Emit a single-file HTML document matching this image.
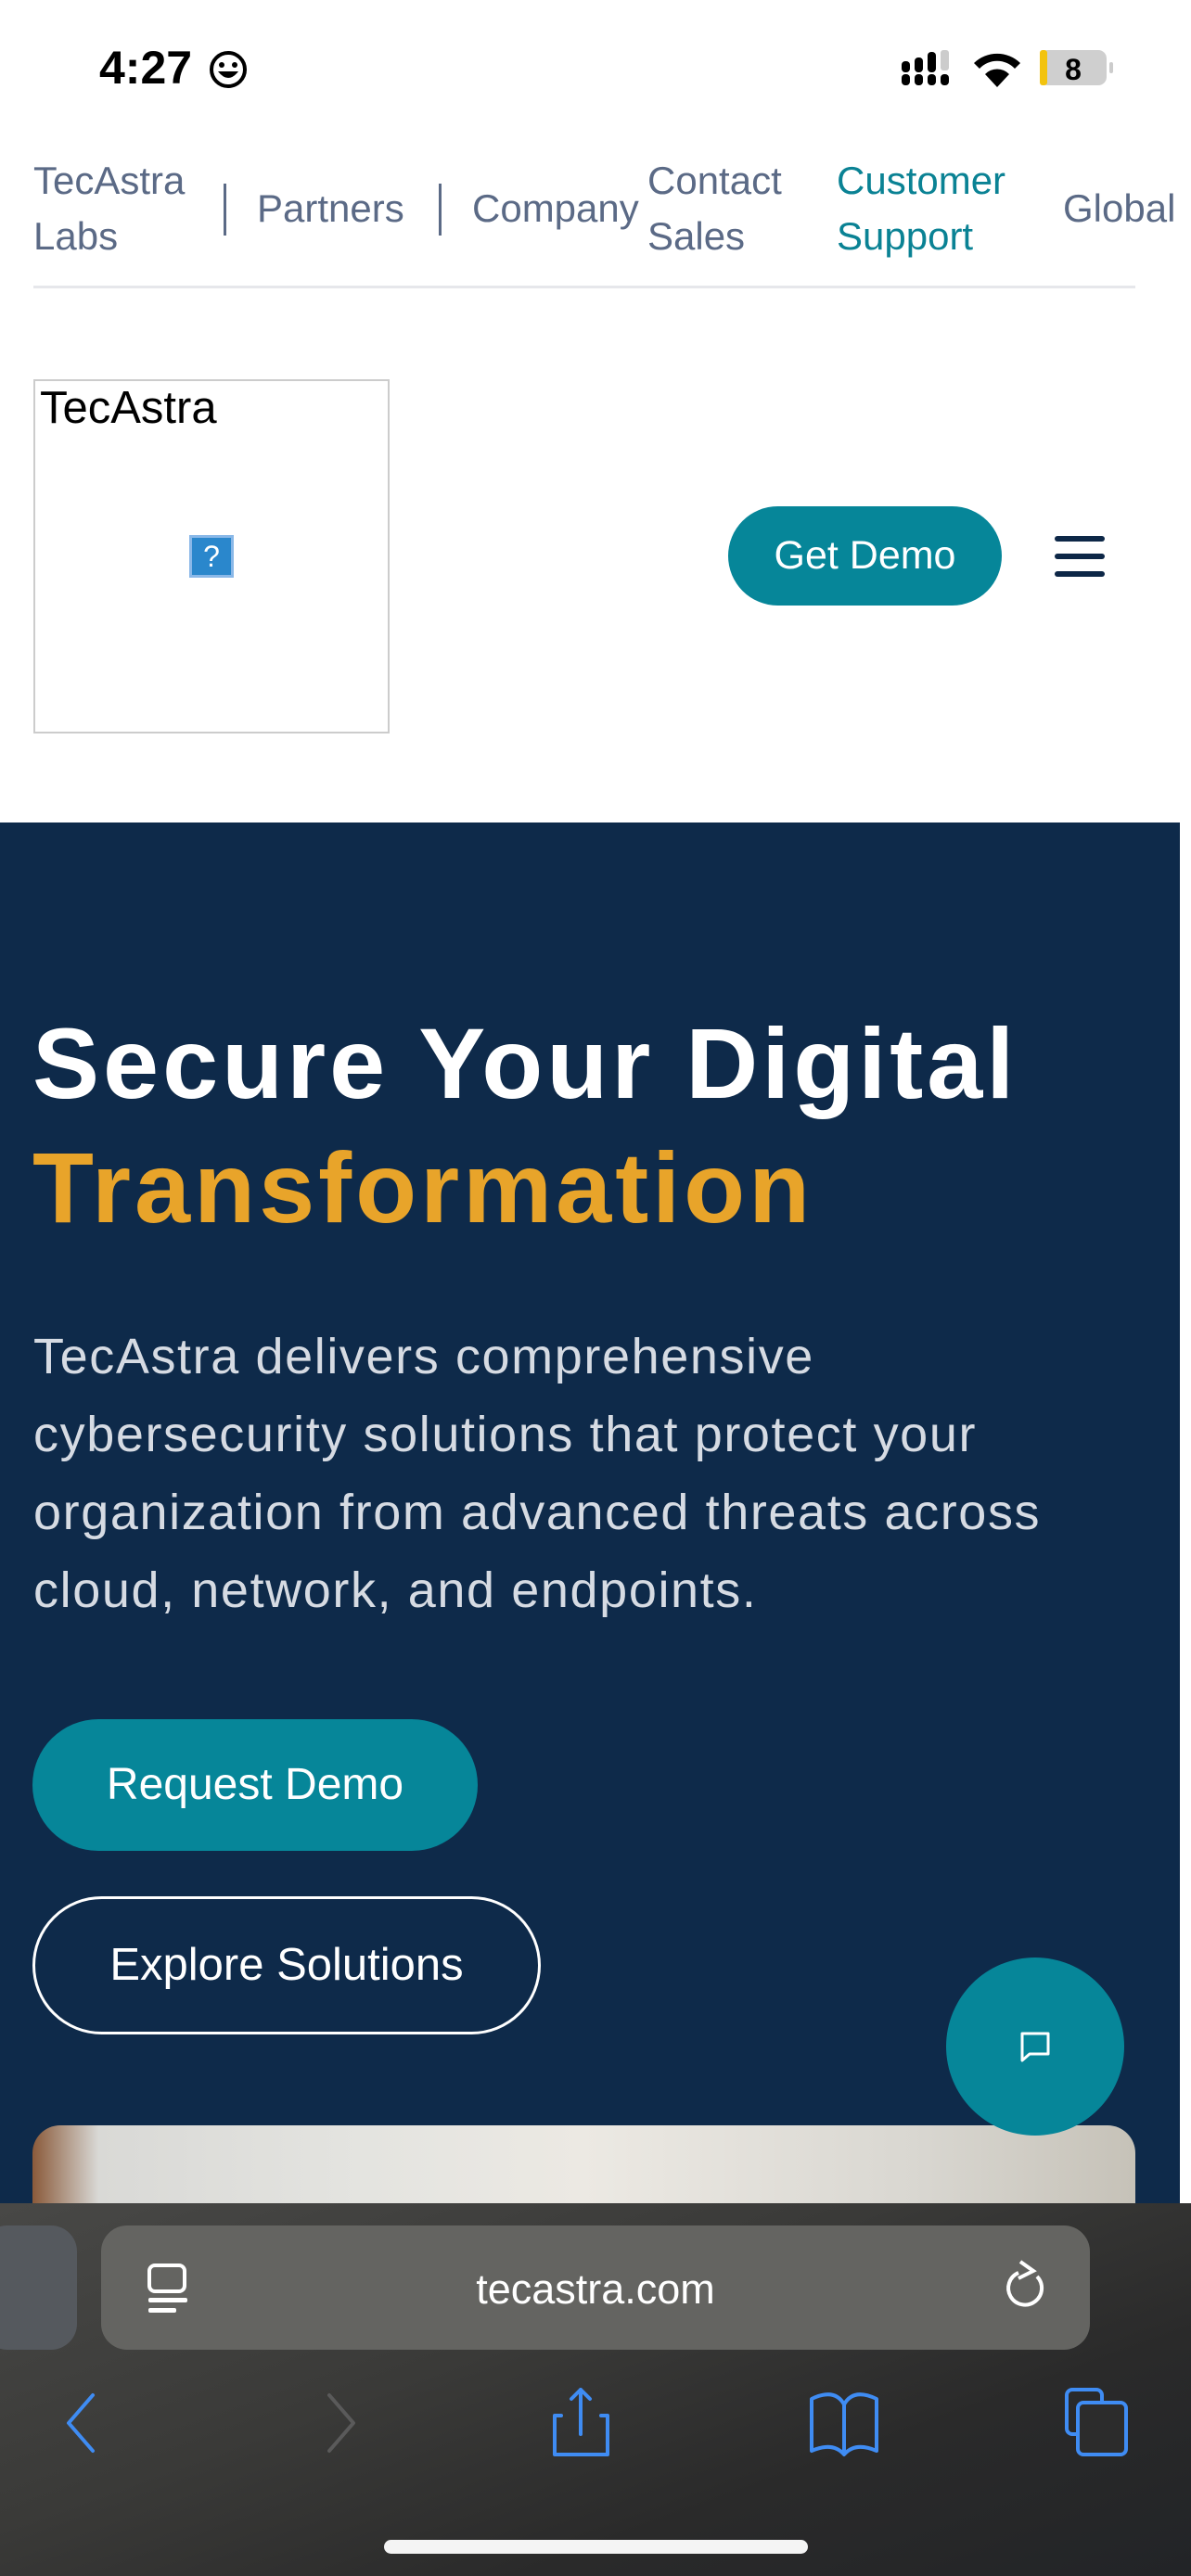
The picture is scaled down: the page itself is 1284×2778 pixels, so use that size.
<!DOCTYPE html>
<html><head><meta charset="utf-8"><style>
*{margin:0;padding:0;box-sizing:border-box}
body{width:1284px;height:2778px;position:relative;overflow:hidden;background:#fff;font-family:"Liberation Sans",sans-serif}
.a{position:absolute}
.nav{color:#5b6a86;font-size:42px;line-height:60px}
</style></head><body>
<div class="a" style="left:107px;top:44px;font-size:50px;font-weight:bold;color:#000">4:27</div>
<svg class="a" style="left:224px;top:53px" width="44" height="44" viewBox="0 0 44 44"><circle cx="22" cy="22" r="18" fill="none" stroke="#000" stroke-width="4"/><circle cx="15" cy="17" r="3"/><circle cx="29" cy="17" r="3"/><path d="M11 24 Q22 38 33 24 Z" fill="#000"/></svg>
<svg class="a" style="left:970px;top:52px" width="230" height="44" viewBox="0 0 230 44">
<g fill="#000"><rect x="2" y="28" width="9" height="12" rx="4"/><rect x="16" y="28" width="9" height="12" rx="4"/><rect x="30" y="28" width="9" height="12" rx="4"/><rect x="44" y="28" width="9" height="12" rx="4"/><rect x="2" y="14" width="9" height="12" rx="4"/><rect x="16" y="10" width="9" height="16" rx="4"/><rect x="30" y="4" width="9" height="22" rx="4"/></g><rect x="44" y="2" width="9" height="22" rx="3" fill="#ccc"/>
<path d="M80 16 A36 36 0 0 1 130 16 L124 22 A26 26 0 0 0 86 22Z M92 28 A18 18 0 0 1 118 28 L105 42Z" fill="#000"/>
<rect x="151" y="2" width="72" height="38" rx="9" fill="#cfcfcf"/><rect x="151" y="2" width="8" height="38" rx="3" fill="#f2c30f"/><rect x="226" y="15" width="4" height="12" rx="2" fill="#ccc"/>
<text x="187" y="34" font-size="32" font-weight="bold" text-anchor="middle" font-family="Liberation Sans">8</text></svg>

<div class="a nav" style="left:36px;top:165px">TecAstra<br>Labs</div>
<div class="a" style="left:241px;top:198px;width:3px;height:56px;background:#5b6a86"></div>
<div class="a nav" style="left:277px;top:195px">Partners</div>
<div class="a" style="left:473px;top:198px;width:3px;height:56px;background:#5b6a86"></div>
<div class="a nav" style="left:509px;top:195px">Company</div>
<div class="a nav" style="left:698px;top:165px">Contact<br>Sales</div>
<div class="a nav" style="left:902px;top:165px;color:#0a8294">Customer<br>Support</div>
<div class="a nav" style="left:1146px;top:195px">Global</div>
<div class="a" style="left:36px;top:308px;width:1188px;height:3px;background:#e6e7eb"></div>

<div class="a" style="left:36px;top:409px;width:384px;height:382px;border:2px solid #ccc"></div>
<div class="a" style="left:43px;top:412px;font-size:49px;color:#000">TecAstra</div>
<div class="a" style="left:204px;top:577px;width:48px;height:46px;border:3px solid #8ab8e8;background:#2a87cc;color:#fff;font-size:32px;text-align:center;line-height:40px">?</div>
<div class="a" style="left:785px;top:546px;width:295px;height:107px;border-radius:54px;background:#068699;color:#fff;font-size:43px;text-align:center;line-height:107px">Get Demo</div>
<div class="a" style="left:1137px;top:578px;width:54px;height:6px;border-radius:3px;background:#0d2747"></div>
<div class="a" style="left:1137px;top:597px;width:54px;height:6px;border-radius:3px;background:#0d2747"></div>
<div class="a" style="left:1137px;top:616px;width:54px;height:6px;border-radius:3px;background:#0d2747"></div>

<div class="a" style="left:0;top:887px;width:1272px;height:1500px;background:#0e2a4a"></div>
<div class="a" style="left:35px;top:1080px;font-size:108px;font-weight:bold;color:#fff;line-height:134px;letter-spacing:4px;white-space:nowrap">Secure Your Digital<br><span style="color:#e8a42a">Transformation</span></div>
<div class="a" style="left:36px;top:1421px;font-size:54px;color:#d6dbe3;line-height:84px;width:1240px;letter-spacing:1.6px;white-space:nowrap">TecAstra delivers comprehensive<br>cybersecurity solutions that protect your<br>organization from advanced threats across<br>cloud, network, and endpoints.</div>
<div class="a" style="left:35px;top:1854px;width:480px;height:142px;border-radius:71px;background:#068699;color:#fff;font-size:48px;text-align:center;line-height:142px">Request Demo</div>
<div class="a" style="left:35px;top:2045px;width:548px;height:149px;border-radius:75px;border:3px solid #fff;color:#fff;font-size:49px;text-align:center;line-height:143px">Explore Solutions</div>
<div class="a" style="left:35px;top:2292px;width:1189px;height:200px;border-radius:30px;background:linear-gradient(90deg,#8a5a3a 0%,#d9d9d6 6%,#e4e4e0 30%,#ece9e3 50%,#d9d7d1 80%,#c6c2b8 100%)"></div>
<div class="a" style="left:1020px;top:2111px;width:192px;height:192px;border-radius:50%;background:#068699"></div>
<svg class="a" style="left:1096px;top:2187px" width="40" height="40" viewBox="0 0 40 40"><path d="M6 6 H34 V28 H14 L6 35 Z" fill="none" stroke="#fff" stroke-width="3" stroke-linejoin="round"/></svg>

<div class="a" style="left:0;top:2376px;width:1284px;height:402px;background:linear-gradient(160deg,#484846,#3a3a38 40%,#2a2a2a 70%,#222427)"></div>
<div class="a" style="left:-20px;top:2400px;width:103px;height:134px;border-radius:28px;background:#55595e"></div>
<div class="a" style="left:109px;top:2400px;width:1066px;height:134px;border-radius:28px;background:#646461"></div>
<div class="a" style="left:109px;top:2443px;width:1066px;text-align:center;color:#fff;font-size:45px">tecastra.com</div>
<svg class="a" style="left:158px;top:2440px" width="50" height="58" viewBox="0 0 50 58"><rect x="3" y="3" width="38" height="28" rx="6" fill="none" stroke="#fff" stroke-width="4"/><rect x="2" y="38" width="42" height="5" rx="2" fill="#fff"/><rect x="2" y="49" width="30" height="5" rx="2" fill="#fff"/></svg>
<svg class="a" style="left:1080px;top:2435px" width="50" height="60" viewBox="0 0 50 60"><path d="M18 16 A18 18 0 1 0 38 20" fill="none" stroke="#fff" stroke-width="4"/><path d="M20 4 L34 14 L18 22" fill="none" stroke="#fff" stroke-width="4"/></svg>
<svg class="a" style="left:60px;top:2575px" width="1170" height="80" viewBox="0 0 1170 80" fill="none" stroke-width="4" stroke-linecap="round" stroke-linejoin="round">
<path d="M40 8 L14 38 L40 68" stroke="#3f8cf3"/>
<path d="M295 8 L321 38 L295 68" stroke="#5a5a5a"/>
<path d="M545 30 H538 V72 H595 V30 H588 M566 50 V2 M556 12 L566 2 L576 12" stroke="#3f8cf3"/>
<path d="M815 68 V12 Q840 0 850 18 Q860 0 885 12 V68 Q862 58 850 72 Q838 58 815 68 Z M850 18 V70" stroke="#3f8cf3"/>
<rect x="1090" y="2" width="38" height="48" rx="6" stroke="#3f8cf3"/><rect x="1102" y="16" width="52" height="56" rx="6" stroke="#3f8cf3" fill="#2c2c2c"/>
</svg>
<div class="a" style="left:414px;top:2739px;width:457px;height:15px;border-radius:8px;background:#f4f4f4"></div>
</body></html>
